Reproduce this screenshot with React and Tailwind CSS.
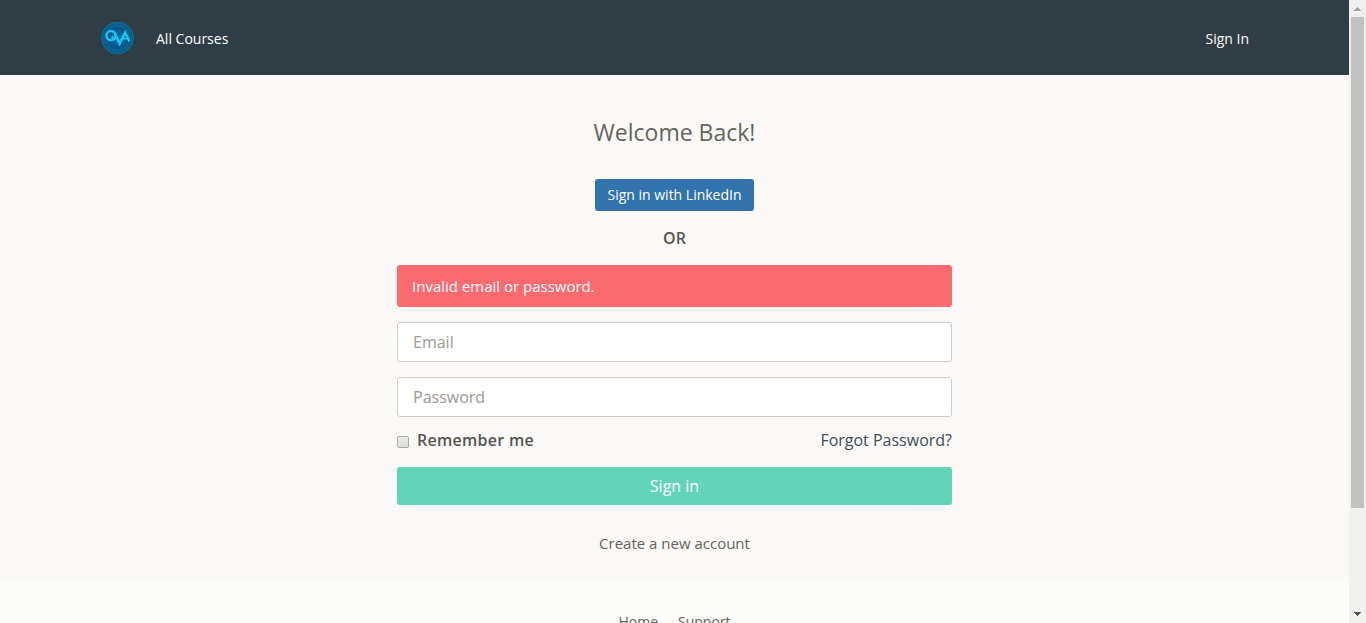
import React from "react";

function Logo() {
  return (
    <svg className="block h-[34px] w-[34px]" viewBox="0 0 34 34" role="img">
      <defs>
        <radialGradient id="disc">
          <stop offset="0" stopColor="#0878ad" />
          <stop offset="0.6" stopColor="#07568a" />
          <stop offset="1" stopColor="#07597f" />
        </radialGradient>
      </defs>
      <circle cx="17.5" cy="17" r="15.9" fill="url(#disc)" stroke="#0b7ba6" strokeWidth="0.9" />
      <circle cx="17.5" cy="17" r="14" fill="none" stroke="#1180aa" strokeWidth="1.3" strokeDasharray="1.2 1" opacity="0.5" />
      <circle cx="17.5" cy="17" r="12.3" fill="none" stroke="#0b7dac" strokeWidth="0.6" />
      <g fill="none" stroke="#1cc4f2" strokeWidth="2.5" strokeLinejoin="miter">
        <circle cx="11" cy="14.6" r="4.5" />
        <path d="M11.6 15.4 L14.6 18.6" strokeWidth="2" />
        <path d="M15.4 13.4 L19.6 22.6 L25.2 11.6 L29.4 20.4" />
        <path d="M23 17.6 H28" strokeWidth="1.8" />
      </g>
    </svg>
  );
}

function Header() {
  return (
    <header className="flex h-[75px] items-center bg-[#2f3d44] pr-[100px] pl-[100px] text-sm text-white">
      <Logo />
      <a className="ml-[22px] pt-[3px]">All Courses</a>
      <a className="ml-auto pt-[3px]">Sign In</a>
    </header>
  );
}

function Field({ type, label }) {
  return (
    <input
      type={type}
      placeholder={label}
      className="mt-[15px] block h-10 w-full rounded-[3px] border border-[#cfcbc6] bg-white px-[15px] text-base placeholder:text-[#9b9891]"
    />
  );
}

function SignIn() {
  return (
    <main className="flex h-[506px] flex-col items-center bg-[#faf9f7]">
      <h1 className="mt-[39px] h-9 text-[23px] leading-9 font-normal text-[#65645d]">Welcome Back!</h1>
      <button className="mt-[29px] h-8 w-[159px] rounded-[3px] bg-[#3173ad] text-sm text-white">Sign in with LinkedIn</button>
      <div className="mt-[15px] text-base leading-6 font-semibold">OR</div>
      <form className="mt-[15px] w-[555px]">
        <div className="h-[42px] rounded-[3px] bg-[#fb6a6f] px-[15px] text-[15px] leading-[43px] text-white">
          Invalid email or password.
        </div>
        <Field type="email" label="Email" />
        <Field type="password" label="Password" />
        <div className="mt-[11px] flex h-6 items-center text-base">
          <input
            type="checkbox"
            className="mt-[4px] h-3 w-3 appearance-none rounded-[2px] border border-[#aaa8a4] bg-linear-to-b from-[#ededeb] to-[#dddddb]"
          />
          <label className="ml-2 font-semibold tracking-[0.28px]">Remember me</label>
          <a className="ml-auto text-[#3f4c53]">Forgot Password?</a>
        </div>
        <button className="mt-[15px] block h-[38px] w-full rounded-[3px] bg-[#62d4b7] text-base text-white">Sign in</button>
      </form>
      <a className="mt-[26px] text-[15px] leading-6 text-[#65645d]">Create a new account</a>
    </main>
  );
}

function Scrollbar() {
  return (
    <div className="flex w-[17px] flex-col items-center bg-[#f0f0ee]">
      <svg className="h-[17px] w-[17px] shrink-0" viewBox="0 0 17 17" shapeRendering="crispEdges">
        <path d="M8 7h1v1h1v1h1v1h1v1H5v-1h1V9h1V8h1z" fill="#a3a29f" />
      </svg>
      <div className="h-[491px] w-[13px] bg-[#c1c1bf]" />
      <svg className="mt-auto h-[17px] w-[17px] shrink-0" viewBox="0 0 17 17" shapeRendering="crispEdges">
        <path d="M5 6h7v1h-1v1h-1v1H9v1H8V9H7V8H6V7H5z" fill="#505050" />
      </svg>
    </div>
  );
}

export default function App() {
  return (
    <div className="flex h-[623px] w-[1366px] overflow-hidden font-['Open_Sans',sans-serif] text-[#56554e]">
      <div className="w-[1349px] bg-[#fbfbf9]">
        <Header />
        <SignIn />
        <footer className="flex justify-center gap-5 pt-[30px] text-sm leading-[22px] text-[#65645d]">
          <a>Home</a>
          <a>Support</a>
        </footer>
      </div>
      <Scrollbar />
    </div>
  );
}
